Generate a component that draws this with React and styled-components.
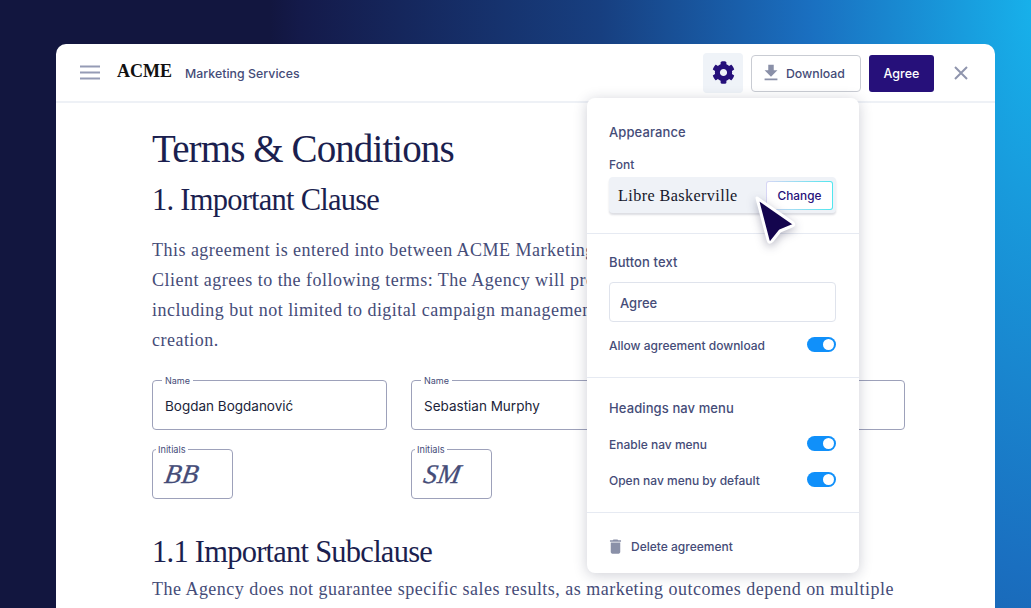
import React from "react";
import styled, { createGlobalStyle } from "styled-components";
import { FaCog } from "react-icons/fa";
import { MdFileDownload, MdDelete } from "react-icons/md";

const Global = createGlobalStyle`
  html, body { margin: 0; padding: 0; height: 100%; overflow: hidden; }
  body { font-family: Inter, "Noto Sans", sans-serif; }
  * { box-sizing: border-box; }
`;
const Page = styled.div`
  width: 1031px; height: 608px; overflow: hidden; padding: 44px 36px 0 56px;
  background: radial-gradient(770px 1900px at 1040px 0px, #17b3ec 0%, #1a6fc0 30%, #173f80 57%, #141a4a 96%, #12163f 100%);
`;
const Card = styled.div`
  position: relative; width: 939px; height: 564px; background: #fff;
  border-radius: 10px 10px 0 0; overflow: hidden;
`;
const Header = styled.header`
  height: 59px; display: flex; align-items: center; padding: 0 24px;
  border-bottom: 2px solid #eef1f6;
`;
const Burger = styled.svg`width: 20px; height: 15px; margin-right: 17px; flex: none;`;
const Logo = styled.div`
  font-family: "Liberation Serif", serif; font-weight: 700; font-size: 18px; color: #111;
  letter-spacing: 0; margin-top: -2px; width: 68px;
`;
const Sub = styled.div`font-size: 12.3px; font-weight: 500; color: #454c78; letter-spacing: .05px; padding-top: 1px;`;
const Spacer = styled.div`flex: 1;`;
const GearBtn = styled.div`
  width: 40px; height: 40px; border-radius: 4px; background: #eff3f8; color: #26107a;
  display: flex; align-items: center; justify-content: center; margin-right: 8px; font-size: 23px;
`;
const DownloadBtn = styled.div`
  width: 110px; height: 37px; border: 1px solid #c9ccd3; border-radius: 4px; display: flex; align-items: center;
  gap: 4px; padding-left: 8px; font-size: 12.3px; font-weight: 500; color: #454c78; margin: 1px 8px 0 0;
  svg { color: #8a90a8; font-size: 22px; }
`;
const AgreeBtn = styled.div`
  width: 65px; height: 37px; border-radius: 3px; background: #26107a; color: #fff; margin-top: 1px;
  display: flex; align-items: center; justify-content: center; font-size: 12.5px; font-weight: 500; margin-right: 19px;
`;
const Close = styled.svg`width: 16px; height: 16px; margin-right: 2px;`;
const Doc = styled.main`padding: 21px 90px 0 96px;`;
const H1 = styled.h1`
  margin: 0; font: 400 39px/50px "Liberation Serif", serif; color: #1b1f4f; letter-spacing: -.9px;
`;
const H2 = styled.h2`
  margin: ${p => p.$top || 0}px 0 ${p => p.$bottom || 0}px; font: 400 30.5px/40px "Liberation Serif", serif; color: #1b1f4f; letter-spacing: -.75px;
`;
const Para = styled.p`
  margin: 0; font: 400 18px/30px "Liberation Serif", serif; color: #454c78; letter-spacing: .48px; white-space: nowrap;
`;
const Signers = styled.div`
  display: grid; grid-template-columns: repeat(3, 235px); gap: 24px; margin-top: 25px;
`;
const Signer = styled.div`display: flex; flex-direction: column; gap: 19px;`;
const Field = styled.div`
  position: relative; height: 50px; border: 1px solid #9da1ba; border-radius: 4px; display: flex; align-items: center;
  padding: 1px 0 0 12px; width: ${p => p.$w || "100%"}; font-size: 13.5px; color: #1c1f3a;
`;
const Legend = styled.span`
  position: absolute; left: 9px; top: -6px; padding: 0 3px; background: #fff; font-size: 9px; line-height: 11px;
  color: #454c78;
`;
const LegendSmall = styled(Legend)`left: 3px; padding: 0 2px; font-size: 9.2px;`;
const Script = styled.span`
  display: block; font: italic 500 27px "Liberation Serif", serif; color: #454c78; letter-spacing: .5px;
  transform: skewX(-10deg); -webkit-text-stroke: .3px #454c78;
`;
const Panel = styled.aside`
  position: absolute; left: 531px; top: 54px; width: 272px; height: 475px; background: #fff; border-radius: 8px;
  box-shadow: 0 2px 14px rgba(30,35,70,.22); color: #454c78; font-weight: 500;
`;
const Section = styled.section`
  padding: ${p => p.$pad}; height: ${p => p.$h}px; border-bottom: ${p => p.$last ? "0" : "1px solid #e6eaf2"};
`;
const Title = styled.div`font-size: 13px; line-height: 16px; color: #454c78; letter-spacing: .1px;`;
const Small = styled.div`font-size: 12px; line-height: 14px; margin-top: 18px; letter-spacing: .05px;`;
const FontBox = styled.div`
  height: 36px; margin-top: 5px; background: #eff2f7; border-radius: 4px; display: flex; align-items: center;
  justify-content: space-between; padding: 0 3px 0 9px; box-shadow: 0 2px 2px rgba(30,35,70,.15);
`;
const FontName = styled.span`
  font: 400 16.2px "Liberation Serif", serif; color: #15172b; letter-spacing: .4px; padding-top: 2px;
`;
const Change = styled.div`
  width: 67px; height: 29px; border-radius: 3px; background: #fff; color: #26107a; font-size: 11.8px; font-weight: 500;
  display: flex; align-items: center; justify-content: center; border: 1.5px solid transparent; padding-top: 1px;
  background: linear-gradient(#fff,#fff) padding-box, linear-gradient(90deg,#d8d6f5,#4fe6ee) border-box;
`;
const Input = styled.div`
  height: 40px; margin-top: 12px; border: 1px solid #dfe3ec; border-radius: 4px; display: flex; align-items: center;
  padding: 1px 0 0 10px; font-size: 13px; color: #454c78;
`;
const Row = styled.div`
  display: flex; align-items: center; justify-content: space-between; font-size: 12px; line-height: 16px; margin-top: ${p => p.$top}px;
  span { padding-top: 2px; }
`;
const Toggle = styled.div`
  width: 29px; height: 15px; border-radius: 8px; background: #1090fa; position: relative; flex: none; margin-top: -2px;
  &::after { content: ""; position: absolute; right: 2px; top: 2px; width: 11px; height: 11px; border-radius: 50%; background: #fff; }
`;
const Delete = styled.div`
  display: flex; align-items: center; gap: 6px; font-size: 12px; padding-top: 24px; margin-left: -3px;
  svg { color: #8a90a8; font-size: 19px; }
`;
const Pointer = styled.svg`
  position: absolute; left: 691px; top: 144px; width: 50px; height: 56px; overflow: visible;
  filter: drop-shadow(0 3px 5px rgba(20,20,60,.3));
`;

const people = [
  { name: "Bogdan Bogdanović", init: "BB" },
  { name: "Sebastian Murphy", init: "SM" },
  { name: "", init: "" },
];

export default function App() {
  return (
    <Page>
      <Global />
      <Card>
        <Header>
          <Burger viewBox="0 0 20 15"><path d="M0 1.5h20M0 7.5h20M0 13.5h20" stroke="#959bb5" strokeWidth="2" /></Burger>
          <Logo>ACME</Logo>
          <Sub>Marketing Services</Sub>
          <Spacer />
          <GearBtn><FaCog /></GearBtn>
          <DownloadBtn><MdFileDownload />Download</DownloadBtn>
          <AgreeBtn>Agree</AgreeBtn>
          <Close viewBox="0 0 16 16"><path d="M2 2l12 12M14 2L2 14" stroke="#8f95ad" strokeWidth="2" /></Close>
        </Header>
        <Doc>
          <H1>Terms &amp; Conditions</H1>
          <H2 $top={6} $bottom={15}>1. Important Clause</H2>
          <Para>
            This agreement is entered into between ACME Marketing Services (the Agency) and the<br />
            Client agrees to the following terms: The Agency will provide marketing services,<br />
            including but not limited to digital campaign management, SEO, and content<br />
            creation.
          </Para>
          <Signers>
            {people.map((p, i) => (
              <Signer key={i}>
                <Field>
                  {p.name && <Legend>Name</Legend>}
                  {p.name}
                </Field>
                {p.init && (
                  <Field $w="81px">
                    <LegendSmall>Initials</LegendSmall>
                    <Script>{p.init}</Script>
                  </Field>
                )}
              </Signer>
            ))}
          </Signers>
          <H2 $top={33} $bottom={2}>1.1 Important Subclause</H2>
          <Para>The Agency does not guarantee specific sales results, as marketing outcomes depend on multiple</Para>
        </Doc>
        <Panel>
          <Section $h={136} $pad="26px 23px 0 22px">
            <Title>Appearance</Title>
            <Small>Font</Small>
            <FontBox>
              <FontName>Libre Baskerville</FontName>
              <Change>Change</Change>
            </FontBox>
          </Section>
          <Section $h={144} $pad="20px 23px 0 22px">
            <Title>Button text</Title>
            <Input>Agree</Input>
            <Row $top={14}><span>Allow agreement download</span><Toggle /></Row>
          </Section>
          <Section $h={135} $pad="22px 23px 0 22px">
            <Title>Headings nav menu</Title>
            <Row $top={19}><span>Enable nav menu</span><Toggle /></Row>
            <Row $top={18}><span>Open nav menu by default</span><Toggle /></Row>
          </Section>
          <Section $h={60} $pad="0 23px 0 22px" $last>
            <Delete><MdDelete />Delete agreement</Delete>
          </Section>
        </Panel>
        <Pointer viewBox="0 0 50 56">
          <path d="M10 10 L46 35 Q48 37 45 38 L33 43 L25 53 Q22 56 21 52 Z" fill="#14054e" stroke="#fff" strokeWidth="3" strokeLinejoin="round" />
        </Pointer>
      </Card>
    </Page>
  );
}
